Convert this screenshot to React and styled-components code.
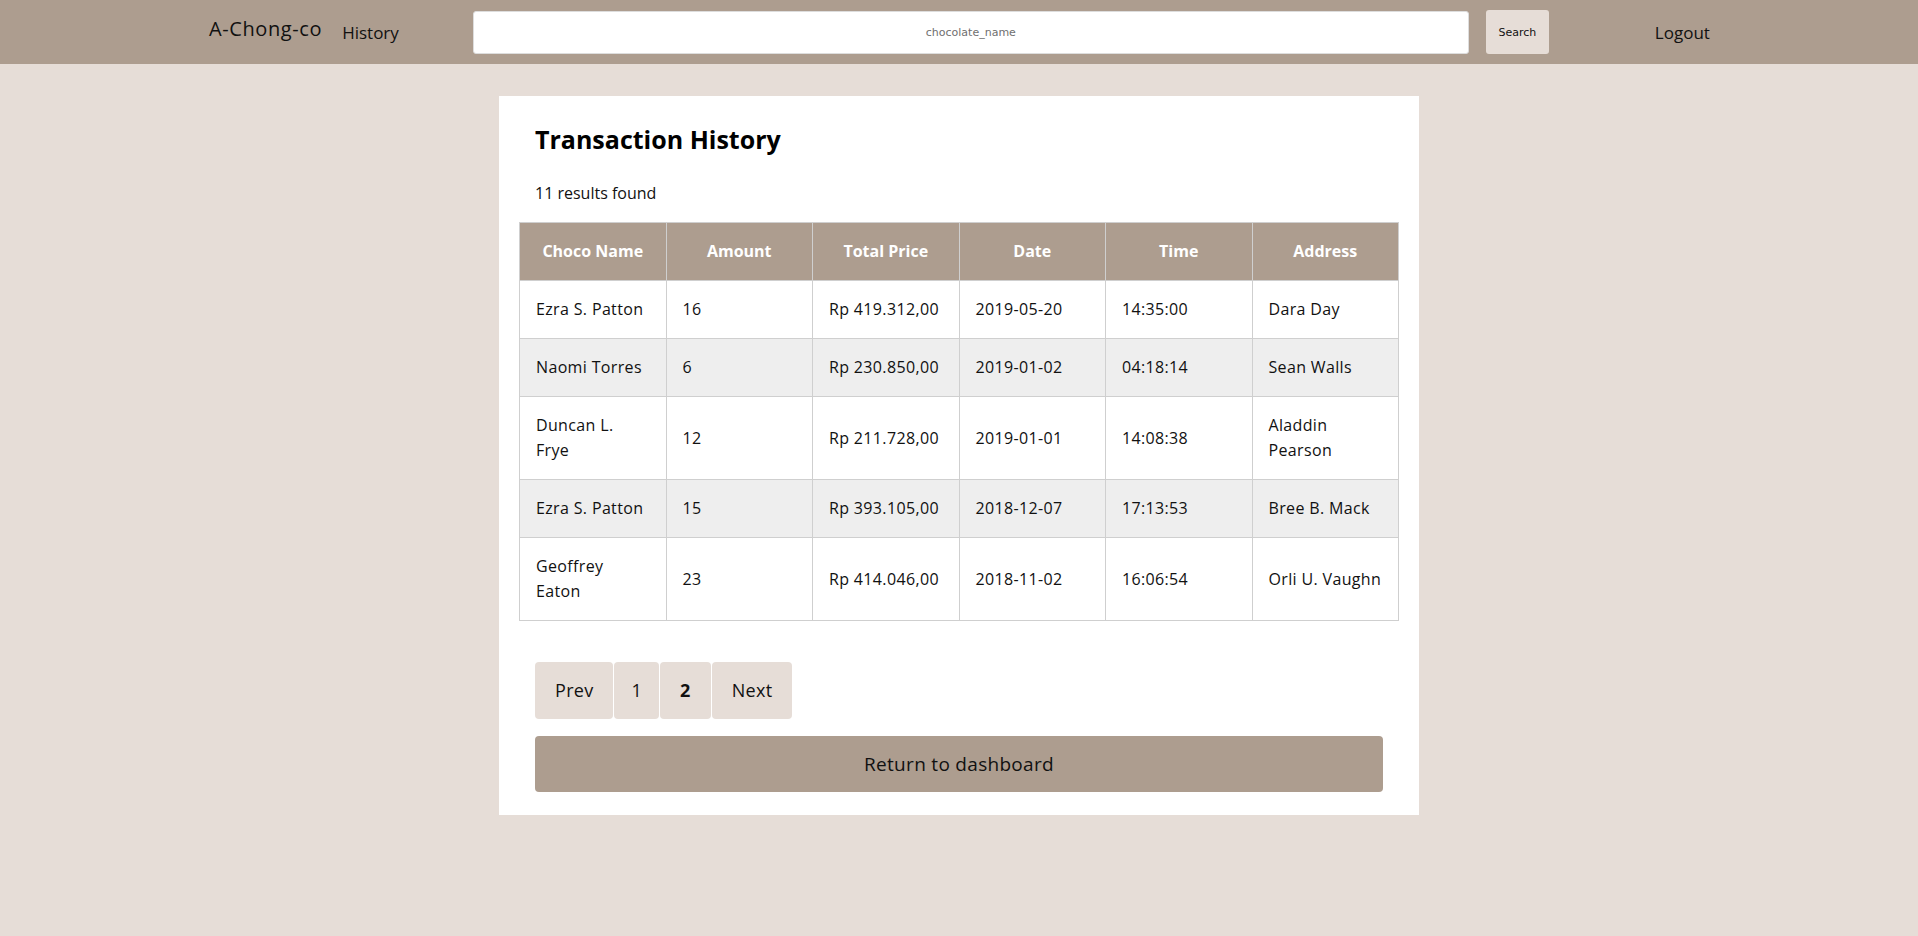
import React from "react";
import styled, { createGlobalStyle } from "styled-components";

const GlobalStyle = createGlobalStyle`
  * {
    box-sizing: border-box;
  }
  body {
    margin: 0;
    background: #e6ddd7;
    font-family: "Open Sans", "Noto Sans", sans-serif;
    color: #111;
  }
`;

const NavBar = styled.nav`
  height: 64px;
  background: #ad9d8f;
`;

const NavInner = styled.div`
  width: 1500px;
  height: 100%;
  margin: 0 auto;
  display: flex;
  align-items: center;

  & > * {
    flex-shrink: 0;
    white-space: nowrap;
  }
`;

const Brand = styled.a`
  font-size: 20px;
  letter-spacing: 0.6px;
  color: #111;
  text-decoration: none;
  margin-right: 20px;
  margin-top: -8px;
`;

const NavLink = styled.a`
  font-size: 17px;
  color: #111;
  text-decoration: none;
  margin-left: ${(p) => p.$offset || 0}px;
`;

const SearchForm = styled.form`
  display: flex;
  align-items: center;
  gap: 17px;
  margin-left: 74px;
`;

const SearchInput = styled.input`
  width: 996px;
  height: 43px;
  border: 1px solid #ddd;
  border-radius: 3px;
  background: #fff;
  text-align: center;
  font-family: "DejaVu Sans", sans-serif;
  font-size: 11px;
  outline: none;

  &::placeholder {
    color: #6f6f6f;
  }
`;

const SearchButton = styled.button`
  width: 63px;
  height: 44px;
  border: none;
  border-radius: 3px;
  background: #e6ddd7;
  font-family: "DejaVu Sans", sans-serif;
  font-size: 11px;
  color: #111;
`;

const Main = styled.main`
  padding-top: 32px;
`;

const Card = styled.section`
  width: 920px;
  margin: 0 auto;
  background: #fff;
  padding: 20px 20px 23px;
`;

const Title = styled.h1`
  margin: 4px 16px 0;
  font-size: 25px;
  line-height: 39px;
  font-weight: 700;
  color: #000;
`;

const Results = styled.p`
  margin: 22px 16px 17px;
  font-size: 16px;
  line-height: 24px;
`;

const Table = styled.table`
  width: 100%;
  border-collapse: collapse;
  table-layout: fixed;
`;

const HeadCell = styled.th`
  background: #ad9d8f;
  color: #fff;
  font-weight: 700;
  font-size: 16px;
  line-height: 25px;
  padding: 16px;
  border: 1px solid #cfcfcf;
  text-align: center;
`;

const Row = styled.tr`
  background: ${(p) => (p.$striped ? "#eeeeee" : "#fff")};
`;

const Cell = styled.td`
  font-size: 16px;
  line-height: 25px;
  letter-spacing: 0.35px;
  padding: 16px;
  border: 1px solid #cfcfcf;
  vertical-align: middle;
`;

const Pagination = styled.div`
  display: flex;
  gap: 1px;
  margin: 41px 16px 0;
`;

const PageButton = styled.button`
  border: none;
  border-radius: 4px;
  background: #e6ddd7;
  padding: 16px ${(p) => (p.$narrow ? 17 : 20)}px;
  font-family: inherit;
  font-size: 18px;
  line-height: 25px;
  letter-spacing: 0.3px;
  font-weight: ${(p) => (p.$active ? 700 : 400)};
  color: #111;
`;

const ReturnButton = styled.button`
  display: block;
  width: calc(100% - 32px);
  height: 56px;
  margin: 17px 16px 0;
  border: none;
  border-radius: 4px;
  background: #ad9d8f;
  font-family: inherit;
  font-size: 19px;
  letter-spacing: 0.3px;
  color: #111;
`;

const columns = ["Choco Name", "Amount", "Total Price", "Date", "Time", "Address"];

const transactions = [
  ["Ezra S. Patton", "16", "Rp 419.312,00", "2019-05-20", "14:35:00", "Dara Day"],
  ["Naomi Torres", "6", "Rp 230.850,00", "2019-01-02", "04:18:14", "Sean Walls"],
  ["Duncan L. Frye", "12", "Rp 211.728,00", "2019-01-01", "14:08:38", "Aladdin Pearson"],
  ["Ezra S. Patton", "15", "Rp 393.105,00", "2018-12-07", "17:13:53", "Bree B. Mack"],
  ["Geoffrey Eaton", "23", "Rp 414.046,00", "2018-11-02", "16:06:54", "Orli U. Vaughn"],
];

const App = () => {
  return (
    <>
      <GlobalStyle />
      <NavBar>
        <NavInner>
          <Brand href="#">A-Chong-co</Brand>
          <NavLink href="#">History</NavLink>
          <SearchForm onSubmit={(e) => e.preventDefault()}>
            <SearchInput placeholder="chocolate_name" />
            <SearchButton type="submit">Search</SearchButton>
          </SearchForm>
          <NavLink href="#" $offset={106}>
            Logout
          </NavLink>
        </NavInner>
      </NavBar>
      <Main>
        <Card>
          <Title>Transaction History</Title>
          <Results>11 results found</Results>
          <Table>
            <thead>
              <tr>
                {columns.map((c) => (
                  <HeadCell key={c}>{c}</HeadCell>
                ))}
              </tr>
            </thead>
            <tbody>
              {transactions.map((row, i) => (
                <Row key={i} $striped={i % 2 === 1}>
                  {row.map((v, j) => (
                    <Cell key={j}>{v}</Cell>
                  ))}
                </Row>
              ))}
            </tbody>
          </Table>
          <Pagination>
            <PageButton>Prev</PageButton>
            <PageButton $narrow>1</PageButton>
            <PageButton $active>2</PageButton>
            <PageButton>Next</PageButton>
          </Pagination>
          <ReturnButton>Return to dashboard</ReturnButton>
        </Card>
      </Main>
    </>
  );
};

export default App;
